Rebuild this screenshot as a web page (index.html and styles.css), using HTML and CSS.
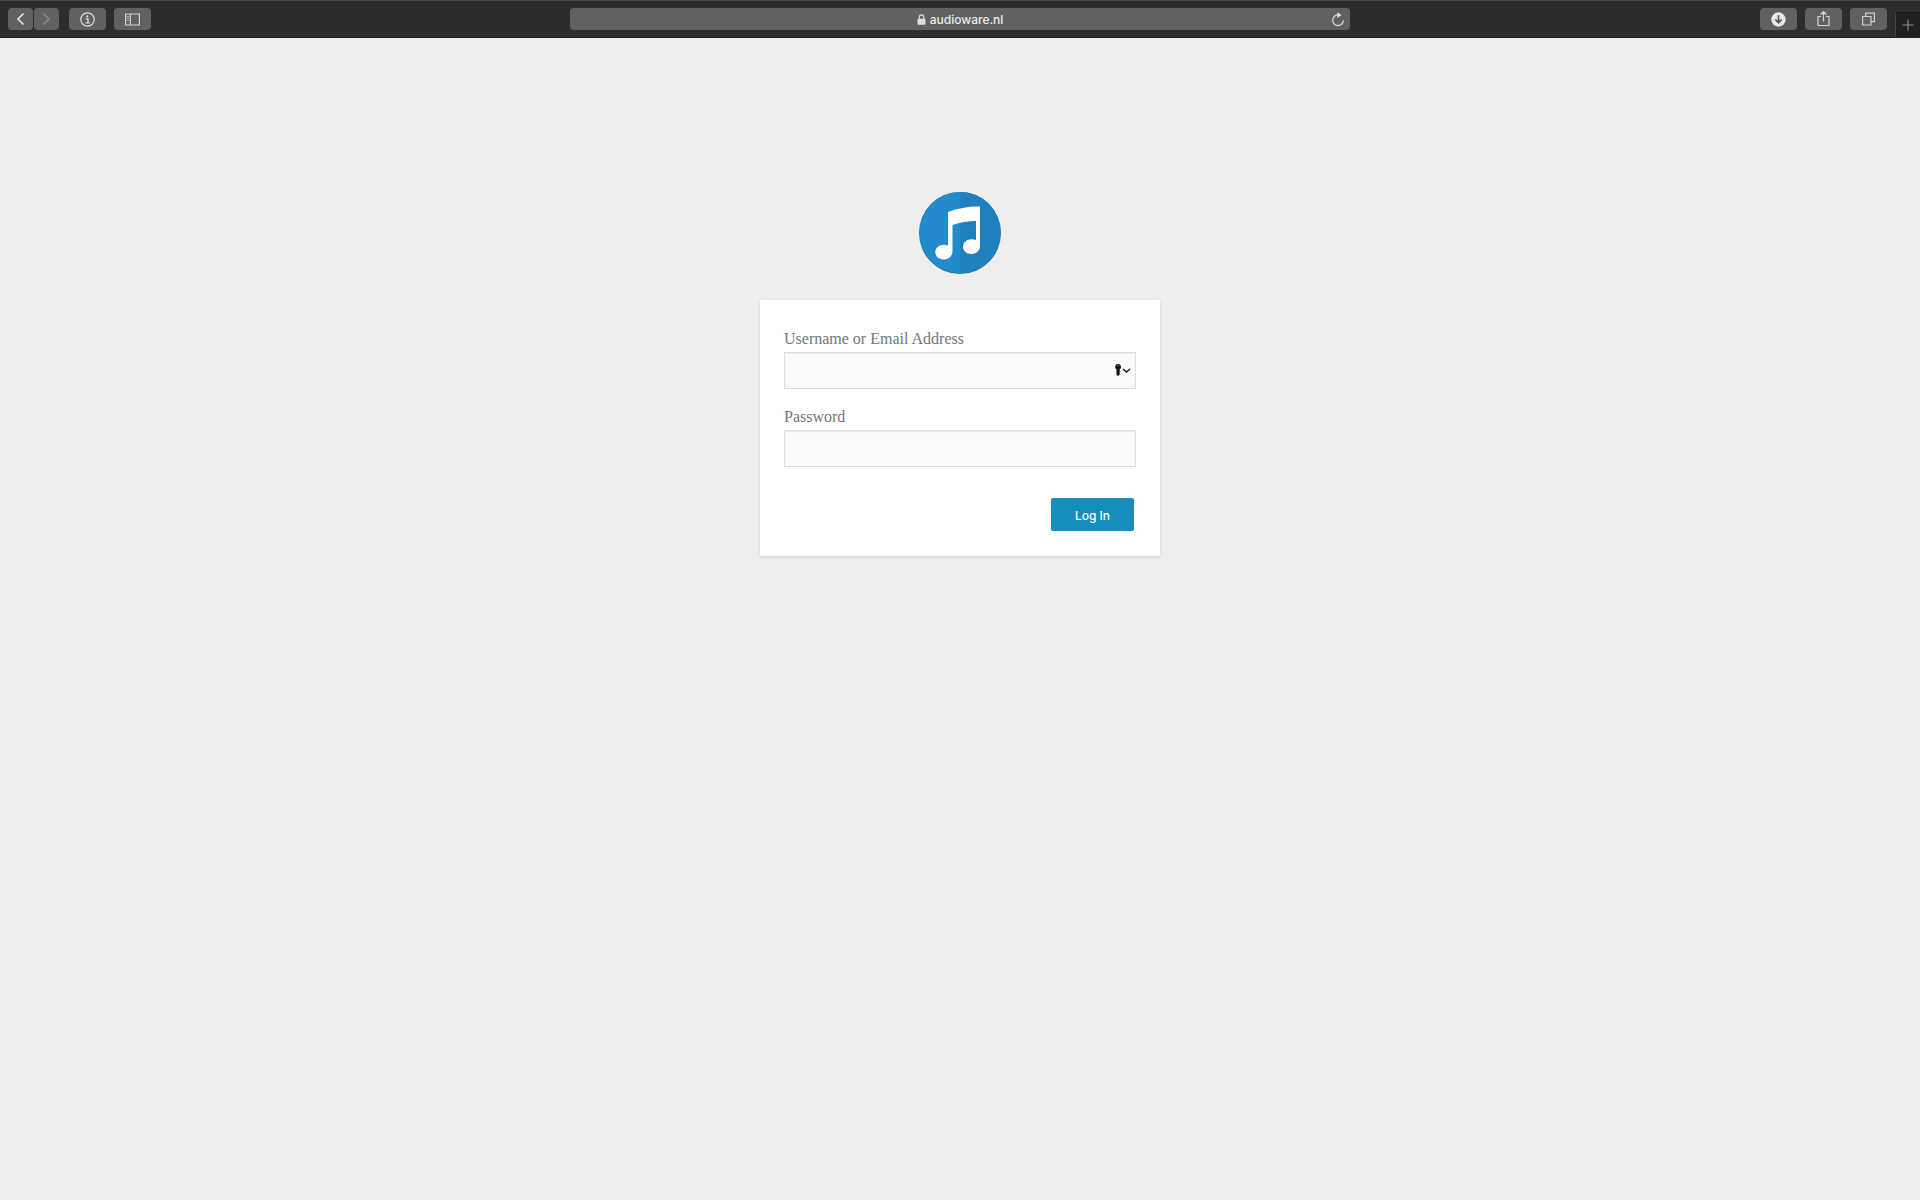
FILE: index.html
```html
<!DOCTYPE html>
<html lang="en">
<head>
<meta charset="utf-8">
<meta name="viewport" content="width=device-width, initial-scale=1">
<title>Log In</title>
<link rel="stylesheet" href="styles.css">
</head>
<body>
<header class="toolbar">
  <div class="tools">
    <div class="history">
      <button class="tool tool-small" type="button" aria-label="Back"><svg width="9" height="14" viewBox="0 0 9 14"><path d="M7.500 1.500 2 7l5.500 5.500" fill="none" stroke="#e4e4e4" stroke-width="1.700"/></svg></button>
      <button class="tool tool-small" type="button" aria-label="Forward"><svg width="9" height="14" viewBox="0 0 9 14"><path d="M1.500 1.500 7 7l-5.500 5.500" fill="none" stroke="#8a8a8a" stroke-width="1.500"/></svg></button>
    </div>
    <button class="tool" type="button" aria-label="Site information"><svg width="15" height="15" viewBox="0 0 15 15"><circle cx="7.500" cy="7.500" r="6.700" fill="none" stroke="#dedede" stroke-width="1.200"/><circle cx="7.300" cy="4.300" r="1.100" fill="#e6e6e6"/><path d="M5.700 6.800H8v4M5.500 11h4.300" fill="none" stroke="#e6e6e6" stroke-width="1.200"/></svg></button>
    <button class="tool" type="button" aria-label="Sidebar"><svg width="15" height="13" viewBox="0 0 15 13"><path d="M.6 1h13.800v11H.6zM5.300 1v11" fill="none" stroke="#d2d2d2" stroke-width="1.200"/><path d="M1.800 3.500h2.400M1.800 5.500h2.400M1.800 7.500h2.400" stroke="#b4b4b4" stroke-width="1"/></svg></button>
  </div>
  <div class="address">
    <span class="address-text"><svg width="9" height="11" viewBox="0 0 9 11"><rect x=".5" y="4.700" width="8" height="6" rx="1" fill="#dedede"/><path d="M2.200 5V3.200a2.300 2.300 0 0 1 4.600 0V5" fill="none" stroke="#dedede" stroke-width="1.200"/></svg>audioware.nl</span>
    <button class="reload" type="button" aria-label="Reload"><svg width="14" height="15" viewBox="0 0 14 15"><path d="M7.500 3A5.300 5.300 0 1 0 12.300 8.200" fill="none" stroke="#d6d6d6" stroke-width="1.300"/><path d="M6.300.2 10.500 3.100 6.300 6z" fill="#e2e2e2"/></svg></button>
  </div>
  <div class="tools tools-end">
    <button class="tool" type="button" aria-label="Downloads"><svg width="15" height="15" viewBox="0 0 15 15"><circle cx="7.500" cy="7.500" r="7.200" fill="#e8e8e8"/><path d="M7.500 3.200v7M4.400 7.500l3.100 3.200 3.100-3.200" fill="none" stroke="#555" stroke-width="1.700"/></svg></button>
    <button class="tool" type="button" aria-label="Share"><svg width="13" height="18" viewBox="0 0 13 18"><path d="M4 6.500H1v9h11v-9H9M6.500 11.500V2M3.500 4.700l3-3 3 3" fill="none" stroke="#d6d6d6" stroke-width="1.200"/></svg></button>
    <button class="tool" type="button" aria-label="Show all tabs"><svg width="13" height="14" viewBox="0 0 13 14"><path d="M.6 4.500H9V13H.6zM3.600 4.500V1.200h8.800v8.500H9" fill="none" stroke="#d0d0d0" stroke-width="1.200"/></svg></button>
    <button class="new-tab" type="button" aria-label="New tab"><svg width="12" height="12" viewBox="0 0 12 12"><path d="M6 .5v11M.5 6h11" stroke="#929292" stroke-width="1.100"/></svg></button>
  </div>
</header>
<main class="login">
  <a class="logo" href="#" aria-label="Audioware">
    <svg width="84" height="84" viewBox="0 0 84 84"><circle cx="42" cy="42" r="41" fill="#1b78b4"/><circle cx="42" cy="41.500" r="40.500" fill="#228bcb"/><path d="M42 1a40.500 40.500 0 0 1 0 81z" fill="#1e81bd"/><path transform="translate(0 -2.500)" d="M30 23.500Q46 17.500 62 18V57.500C62 62 58 65.500 53.300 65.500C48.500 65.500 45 62.300 45 58.300C45 54 49 50.800 53.500 50.800Q56 50.800 58 51.500V32.500Q46 32.500 34.500 36.500V62.500C34.500 67.500 30.500 71 25.700 71C21 71 17.300 67.800 17.300 63.800C17.300 59.500 21 56.300 25.700 56.300Q28 56.300 30 57.300Z" fill="#fff"/></svg>
  </a>
  <form class="card">
    <div class="field">
      <label for="user">Username or Email Address</label>
      <div class="control">
        <input id="user" type="text">
        <svg class="key" width="17" height="14" viewBox="0 0 17 14"><path d="M4 1a3 3 0 0 1 1.700 5.500v5L4.200 13 2.500 12V6.500A3 3 0 0 1 4 1z" fill="#111"/><circle cx="4" cy="2.800" r=".7" fill="#999"/><path d="M9 6l3.500 3L16 6" fill="none" stroke="#222" stroke-width="1.600"/></svg>
      </div>
    </div>
    <div class="field">
      <label for="pass">Password</label>
      <div class="control"><input id="pass" type="password"></div>
    </div>
    <button class="submit" type="submit">Log In</button>
  </form>
</main>
</body>
</html>
```
FILE: styles.css
```css
* {
  box-sizing: border-box;
}

body {
  margin: 0;
  min-height: 100vh;
  background: #eee;
  font-family: "Liberation Serif", serif;
}

button {
  padding: 0;
  border: 0;
  font: inherit;
}

svg {
  display: block;
}

.toolbar {
  display: grid;
  grid-template-columns: 1fr minmax(0, 780px) 1fr;
  align-items: center;
  height: 38px;
  border-top: 1px solid #484848;
  border-bottom: 1px solid #222;
  background: #2d2d2d;
  font-family: Inter, sans-serif;
}

.tools {
  display: flex;
  align-items: center;
  gap: 8px;
  padding-left: 8px;
}

.history {
  display: flex;
  gap: 1px;
  margin-right: 2px;
}

.tool {
  display: grid;
  place-items: center;
  width: 37px;
  height: 22px;
  border-radius: 4px;
  background: #616161;
}

.tool-small {
  width: 25px;
}

.tools-end {
  align-self: stretch;
  justify-content: flex-end;
}

.new-tab {
  display: grid;
  place-items: center;
  align-self: flex-end;
  width: 25px;
  height: 25px;
  border-top: 1px solid #151515;
  border-left: 1px solid #484848;
  background: #202020;
}

.address {
  display: grid;
  grid-template-columns: 24px 1fr 24px;
  align-items: center;
  height: 22px;
  border-radius: 4px;
  background: #616161;
  color: #ececec;
  font-size: 12px;
  font-weight: 500;
}

.address-text {
  display: flex;
  grid-column: 2;
  align-items: center;
  justify-content: center;
  gap: 4px;
}

.reload {
  display: grid;
  place-items: center;
  background: none;
}

.login {
  width: 100%;
  max-width: 400px;
  margin: 0 auto;
  padding-top: 153px;
}

.logo {
  display: block;
  width: 84px;
  margin: 0 auto 25px;
}

.card {
  display: flex;
  flex-direction: column;
  gap: 18px;
  padding: 29px 24px 25px;
  background: #fff;
  box-shadow: 0 1px 3px rgba(0, 0, 0, 0.13);
}

.field label {
  display: block;
  margin-bottom: 3px;
  color: #72777c;
  font-size: 16px;
  line-height: 20px;
}

.control {
  position: relative;
}

.control input {
  display: block;
  width: 100%;
  height: 37px;
  padding: 3px 8px;
  border: 1px solid #ddd;
  border-radius: 0;
  outline: 0;
  background: #fbfbfb;
  box-shadow: inset 0 1px 2px rgba(0, 0, 0, 0.07);
  font: 24px "Liberation Serif", serif;
}

.key {
  position: absolute;
  top: 11px;
  right: 5px;
}

.submit {
  align-self: flex-end;
  width: 83px;
  height: 33px;
  margin: 13px 2px 0 0;
  padding-top: 2px;
  border-radius: 2px;
  background: #168dba;
  color: #fff;
  font-family: Inter, sans-serif;
  font-size: 12px;
  font-weight: 500;
}
```
